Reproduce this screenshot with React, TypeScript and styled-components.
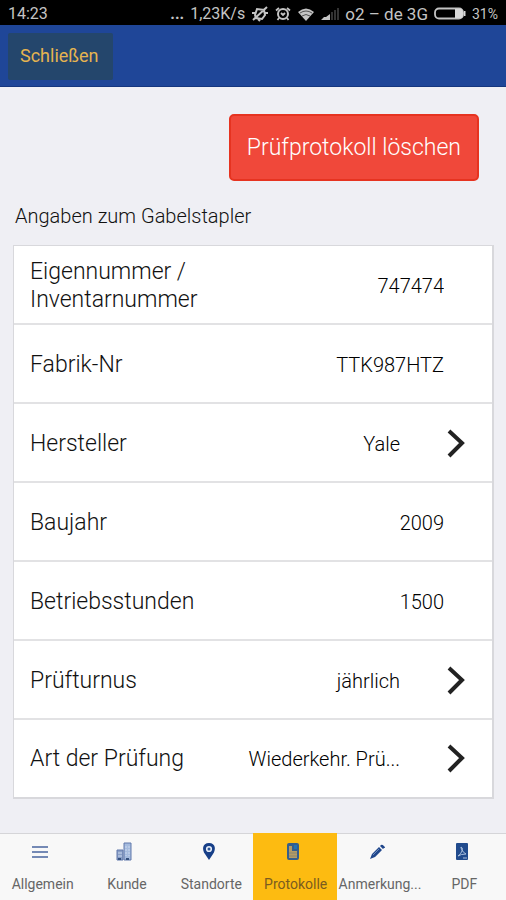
import React from "react";
import styled, { createGlobalStyle } from "styled-components";

const GlobalStyle = createGlobalStyle`
  *, *::before, *::after { box-sizing: border-box; }
  body { margin: 0; background: #efeff4; }
  body, button, input { font-family: Roboto, "Liberation Sans", sans-serif; }
`;

const Page = styled.div`
  display: flex;
  flex-direction: column;
  min-height: 100vh;
`;

const StatusBar = styled.div`
  display: flex;
  align-items: center;
  justify-content: space-between;
  height: 25px;
  padding: 3px 8px 0;
  background: #000;
  color: #c4c4c4;
  font-size: 16px;
  line-height: 22px;
  white-space: nowrap;
`;

const StatusGroup = styled.div`
  display: flex;
  align-items: center;
  gap: 6px;
`;

const NetworkName = styled.span`
  font-size: 17px;
`;

const BatteryLevel = styled.span`
  font-size: 14px;
`;

const Header = styled.header`
  display: flex;
  height: 62px;
  padding: 8px;
  background: #1f4698;
  border-bottom: 1px solid #15367e;
`;

const CloseButton = styled.button`
  height: 47px;
  padding: 0 14px 3px 12px;
  border: 0;
  border-radius: 2px;
  background: #24466c;
  color: #e6b450;
  font-size: 18px;
`;

const Content = styled.main`
  flex: 1;
  display: flex;
  flex-direction: column;
  padding: 27px 12px 34px 13px;
`;

const DeleteButton = styled.button`
  align-self: flex-end;
  height: 67px;
  margin-right: 15px;
  padding: 0 16px;
  border: 2px solid #e63320;
  border-radius: 5px;
  background: #f0483a;
  color: #fff;
  font-size: 23px;
  font-weight: 300;
`;

const SectionTitle = styled.h1`
  margin: 23px 2px 17px;
  color: #111;
  font-size: 20px;
  font-weight: 300;
  line-height: 24px;
`;

const List = styled.div`
  border: 1px solid #d8d8dc;
  border-width: 1px 2px 2px 1px;
  background: #fff;
`;

const Row = styled.div`
  display: flex;
  align-items: center;
  min-height: 79px;
  padding: 2px 27px 0 16px;
  border-bottom: 2px solid #e2e2e4;

  &:last-child {
    min-height: 77px;
    padding-top: 0;
    border-bottom: 0;
  }
`;

const RowLabel = styled.label`
  flex: 1;
  color: #111;
  font-size: 23px;
  font-weight: 300;
  line-height: 28px;
`;

const ValueInput = styled.input`
  width: 160px;
  margin-right: 21px;
  padding: 0;
  border: 0;
  background: transparent;
  color: #000;
  font-size: 20px;
  font-weight: 300;
  line-height: 28px;
  text-align: right;
`;

const ValueButton = styled.button`
  display: flex;
  align-items: center;
  justify-content: flex-end;
  gap: 47px;
  padding: 0;
  border: 0;
  background: transparent;
  color: #000;
  font-size: 20px;
  font-weight: 300;
  line-height: 28px;
  white-space: nowrap;

  svg { flex: none; }
`;

const TabBar = styled.nav`
  position: sticky;
  bottom: 0;
  display: grid;
  grid-template-columns: repeat(6, minmax(0, 1fr));
  height: 68px;
  background: #f8f8f8;
`;

const Tab = styled.a<{ $active?: boolean }>`
  display: flex;
  flex-direction: column;
  align-items: center;
  gap: 13px;
  padding: 8px 0 0;
  border-top: 1px solid ${(p) => (p.$active ? "#fdbb11" : "#d5d5d8")};
  background: ${(p) => (p.$active ? "#fdbb11" : "transparent")};
  color: ${(p) => (p.$active ? "#7a5c20" : "#666")};
  font-size: 14px;
  line-height: 18px;
  text-decoration: none;
  white-space: nowrap;

  svg {
    flex: none;
    margin-right: 4px;
  }
`;

const TabLabel = styled.span`
  padding-left: 1px;
`;

const Chevron = () => (
  <svg width="18" height="30" viewBox="0 0 18 30" fill="none" stroke="#222" strokeWidth="4" aria-hidden="true">
    <path d="M2 2 15 14 2 27" />
  </svg>
);

const MuteIcon = () => (
  <svg width="18" height="16" viewBox="0 0 18 16" fill="none" stroke="#c4c4c4" strokeWidth="2" aria-hidden="true">
    <path d="M4 9l2-6 7 1 1 5-3 4-6-1zM2 14 16 1" />
    <path d="M1 7h3M14 7h3M7 13l2 2" />
  </svg>
);

const AlarmIcon = () => (
  <svg width="16" height="16" viewBox="0 0 16 16" fill="none" stroke="#c4c4c4" aria-hidden="true">
    <circle cx="8" cy="8" r="5" strokeWidth="2" />
    <path d="M6 7l2 2 2-2M1 4.5 4 2M15 4.5 12 2M4 12l-1.5 2M12 12l1.5 2" strokeWidth="1.8" />
  </svg>
);

const WifiIcon = () => (
  <svg width="18" height="14" viewBox="0 0 18 14" aria-hidden="true">
    <path d="M1 5q8-7 16 0l-8 9Z" fill="#c4c4c4" />
    <path d="M3 6q6-4 12 0M5 9q4-3 8 0" fill="none" stroke="#333" strokeWidth=".8" />
  </svg>
);

const SignalIcon = () => (
  <svg width="18" height="14" viewBox="0 0 18 14" aria-hidden="true">
    <path d="M0 13h9V7L5 10H3L0 13Z" fill="#c4c4c4" />
    <path d="M10 5h2v8h-2zM13 3h2v10h-2zM16 1h2v12h-2z" fill="#333" />
  </svg>
);

const BatteryIcon = () => (
  <svg width="32" height="14" viewBox="0 0 32 14" aria-hidden="true">
    <rect x="1" y="1.5" width="28" height="10" rx="4" fill="none" stroke="#c4c4c4" strokeWidth="1.8" />
    <path d="M21 2h6q2 0 2 4.5T27 11h-6zM30 4h1.5v5H30z" fill="#d8d8d8" />
  </svg>
);

const MenuIcon = () => (
  <svg width="16" height="20" viewBox="0 0 16 20" stroke="#7489b5" strokeWidth="2" aria-hidden="true">
    <path d="M0 5h16M0 10h16M0 15h16" />
  </svg>
);

const BuildingsIcon = () => (
  <svg width="16" height="20" viewBox="0 0 16 20" aria-hidden="true">
    <path d="M8 1h7v17H8z" fill="#a5bbde" stroke="#6079ab" />
    <path d="M1 8h6v10H1z" fill="#8a9fc6" stroke="#6079ab" />
    <path d="M10 4v10M13 4v10M3 10v5M5 10v5" stroke="#cbd9ef" strokeDasharray="2 1" />
    <path d="M2 16h3v2H2zM10 16h3v2h-3z" fill="#35517f" />
  </svg>
);

const PinIcon = () => (
  <svg width="14" height="20" viewBox="0 0 14 20" aria-hidden="true">
    <path d="M7 1c-7 0-7 7-4 11l4 6 4-6C14 8 14 1 7 1Z" fill="#173f88" />
    <circle cx="7" cy="7" r="2.3" fill="#2d5696" stroke="#e6edf8" strokeWidth="1.6" />
  </svg>
);

const ProtocolIcon = () => (
  <svg width="14" height="20" viewBox="0 0 14 20" aria-hidden="true">
    <rect x="1" y="1" width="12" height="17" rx="2" fill="#355e8c" />
    <path d="M3 4h3v5h5v7H3z" fill="#b59b64" />
    <path d="M8 3h3v4H8z" fill="#2472b4" />
    <path d="M3 11h8M3 14h8" fill="none" stroke="#8a8770" />
  </svg>
);

const PencilIcon = () => (
  <svg width="16" height="20" viewBox="0 0 16 20" aria-hidden="true">
    <path d="m1 17 2-5 7-7 3 3-7 7-5 2ZM11 4l1-1q1-1 3 1t0 2l-1 1z" fill="#20478c" />
    <path d="m4 13 6-6" stroke="#6d8bbd" />
  </svg>
);

const PdfIcon = () => (
  <svg width="14" height="20" viewBox="0 0 14 20" aria-hidden="true">
    <rect x="1" y="1" width="12" height="17" rx="1" fill="#214b8d" />
    <path d="M6 5q2 0 1 4-1 3-4 5 3-2 8-2-3-1-5-6Z" fill="none" stroke="#a9bfdd" />
    <path d="M8 16h4" stroke="#a9bfdd" />
  </svg>
);

const rows = [
  { id: "nummer", label: "Eigennummer / Inventarnummer", value: "747474" },
  { id: "fabrik", label: "Fabrik-Nr", value: "TTK987HTZ" },
  { id: "hersteller", label: "Hersteller", value: "Yale", opens: true },
  { id: "baujahr", label: "Baujahr", value: "2009" },
  { id: "stunden", label: "Betriebsstunden", value: "1500" },
  { id: "turnus", label: "Prüfturnus", value: "jährlich", opens: true },
  { id: "art", label: "Art der Prüfung", value: "Wiederkehr. Prü...", opens: true },
];

const tabs = [
  { label: "Allgemein", Icon: MenuIcon },
  { label: "Kunde", Icon: BuildingsIcon },
  { label: "Standorte", Icon: PinIcon },
  { label: "Protokolle", Icon: ProtocolIcon, active: true },
  { label: "Anmerkung...", Icon: PencilIcon },
  { label: "PDF", Icon: PdfIcon },
];

export default function App() {
  return (
    <Page>
      <GlobalStyle />
      <StatusBar>
        <span>14:23</span>
        <StatusGroup>
          <b>...</b>
          <span>1,23K/s</span>
          <MuteIcon />
          <AlarmIcon />
          <WifiIcon />
          <SignalIcon />
          <NetworkName>o2 – de 3G</NetworkName>
          <BatteryIcon />
          <BatteryLevel>31%</BatteryLevel>
        </StatusGroup>
      </StatusBar>
      <Header>
        <CloseButton type="button">Schließen</CloseButton>
      </Header>
      <Content>
        <DeleteButton type="button">Prüfprotokoll löschen</DeleteButton>
        <SectionTitle>Angaben zum Gabelstapler</SectionTitle>
        <List>
          {rows.map((row) => (
            <Row key={row.id}>
              <RowLabel htmlFor={row.id}>{row.label}</RowLabel>
              {row.opens ? (
                <ValueButton id={row.id} type="button">
                  <span>{row.value}</span>
                  <Chevron />
                </ValueButton>
              ) : (
                <ValueInput id={row.id} type="text" defaultValue={row.value} />
              )}
            </Row>
          ))}
        </List>
      </Content>
      <TabBar>
        {tabs.map(({ label, Icon, active }) => (
          <Tab key={label} href="#" $active={active} aria-current={active ? "page" : undefined}>
            <Icon />
            <TabLabel>{label}</TabLabel>
          </Tab>
        ))}
      </TabBar>
    </Page>
  );
}
